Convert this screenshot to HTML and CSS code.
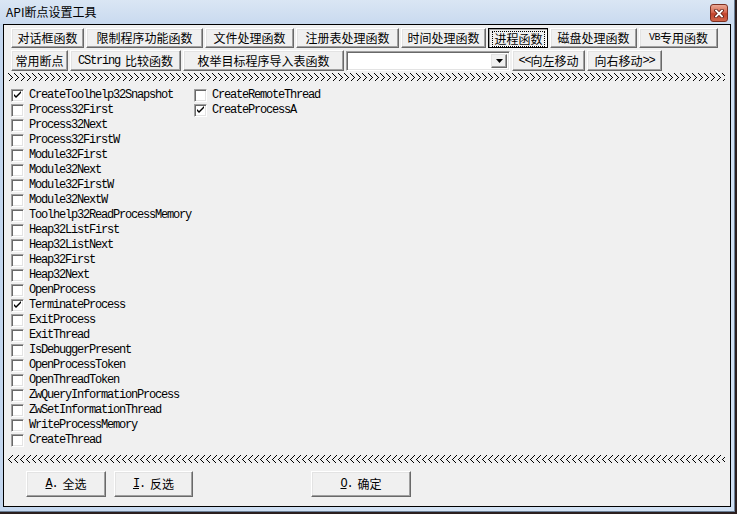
FILE: index.html
```html
<!DOCTYPE html>
<html>
<head>
<meta charset="utf-8">
<title>API断点设置工具</title>
<link rel="stylesheet" href="styles.css">
</head>
<body>
<div class="window">
  <div class="titlebar">
    <span class="title">API断点设置工具</span>
    <span class="close">
      <svg width="10" height="9" viewBox="0 0 10 9"><path d="M2 1.5 L8 7.5 M8 1.5 L2 7.5" stroke="#5a1a10" stroke-width="3.4" stroke-linecap="square"/><path d="M2 1.5 L8 7.5 M8 1.5 L2 7.5" stroke="#fff" stroke-width="1.8" stroke-linecap="square"/></svg>
    </span>
  </div>
  <div class="client">
    <div class="row row1">
      <div class="btn w73">对话框函数</div>
      <div class="btn w117">限制程序功能函数</div>
      <div class="btn w89">文件处理函数</div>
      <div class="btn w103">注册表处理函数</div>
      <div class="btn w85">时间处理函数</div>
      <div class="btn pressed w60"><span class="focus">进程函数</span></div>
      <div class="btn w87">磁盘处理函数</div>
      <div class="btn w79"><span class="lat small">VB</span>专用函数</div>
    </div>
    <div class="row row2">
      <div class="btn w57">常用断点</div>
      <div class="btn w111"><span class="lat sp">CString</span>比较函数</div>
      <div class="btn w161">枚举目标程序导入表函数</div>
      <div class="combo">
        <span class="combo-field"></span>
        <span class="combo-arrow"><svg width="7" height="4" viewBox="0 0 7 4"><path d="M0 0 H7 L3.5 4 Z" fill="#000"/></svg></span>
      </div>
      <div class="btn w73"><span class="lat">&lt;&lt;</span>向左移动</div>
      <div class="btn w75">向右移动<span class="lat">&gt;&gt;</span></div>
    </div>
    <svg class="chevrons" width="717" height="9" viewBox="0 0 717 9">
      <defs>
        <pattern id="rgt" width="6" height="9" patternUnits="userSpaceOnUse">
          <path d="M0.5 0.5 L4.5 4.5 L0.5 8.5" fill="none" stroke="#000" stroke-width="1" shape-rendering="crispEdges"/>
        </pattern>
      </defs>
      <rect width="717" height="9" fill="url(#rgt)"/>
    </svg>
    <div class="list">
      <div class="col col1">
        <label class="item"><span class="box checked"></span>CreateToolhelp32Snapshot</label>
        <label class="item"><span class="box"></span>Process32First</label>
        <label class="item"><span class="box"></span>Process32Next</label>
        <label class="item"><span class="box"></span>Process32FirstW</label>
        <label class="item"><span class="box"></span>Module32First</label>
        <label class="item"><span class="box"></span>Module32Next</label>
        <label class="item"><span class="box"></span>Module32FirstW</label>
        <label class="item"><span class="box"></span>Module32NextW</label>
        <label class="item"><span class="box"></span>Toolhelp32ReadProcessMemory</label>
        <label class="item"><span class="box"></span>Heap32ListFirst</label>
        <label class="item"><span class="box"></span>Heap32ListNext</label>
        <label class="item"><span class="box"></span>Heap32First</label>
        <label class="item"><span class="box"></span>Heap32Next</label>
        <label class="item"><span class="box"></span>OpenProcess</label>
        <label class="item"><span class="box checked"></span>TerminateProcess</label>
        <label class="item"><span class="box"></span>ExitProcess</label>
        <label class="item"><span class="box"></span>ExitThread</label>
        <label class="item"><span class="box"></span>IsDebuggerPresent</label>
        <label class="item"><span class="box"></span>OpenProcessToken</label>
        <label class="item"><span class="box"></span>OpenThreadToken</label>
        <label class="item"><span class="box"></span>ZwQueryInformationProcess</label>
        <label class="item"><span class="box"></span>ZwSetInformationThread</label>
        <label class="item"><span class="box"></span>WriteProcessMemory</label>
        <label class="item"><span class="box"></span>CreateThread</label>
      </div>
      <div class="col col2">
        <label class="item"><span class="box"></span>CreateRemoteThread</label>
        <label class="item"><span class="box checked"></span>CreateProcessA</label>
      </div>
    </div>
    <svg class="chevrons lower" width="717" height="9" viewBox="0 0 717 9">
      <defs>
        <pattern id="lft" width="6" height="9" patternUnits="userSpaceOnUse">
          <path d="M4.5 0.5 L0.5 4.5 L4.5 8.5" fill="none" stroke="#000" stroke-width="1" shape-rendering="crispEdges"/>
        </pattern>
      </defs>
      <rect width="717" height="9" fill="url(#lft)"/>
    </svg>
    <div class="actions">
      <div class="btn big w80"><span class="lat sp"><u>A</u>.</span>全选</div>
      <div class="btn big w79"><span class="lat sp"><u>I</u>.</span>反选</div>
      <div class="btn big w100 ok"><span class="lat sp"><u>O</u>.</span>确定</div>
    </div>
  </div>
</div>
</body>
</html>
```

FILE: styles.css
```css
* { box-sizing: border-box; }
html, body { margin: 0; padding: 0; }
body {
  width: 737px;
  height: 514px;
  overflow: hidden;
  background: #2b1f1f;
  font-family: "Noto Sans CJK SC", "Liberation Sans", sans-serif;
  font-size: 12px;
  color: #000;
}
.window {
  width: 735px;
  height: 512px;
  background: linear-gradient(to right, #c3d6ee, #d4e3f4 60%, #cfdff2);
  border-right: 1px solid #6b7f96;
  border-bottom: 1px solid #6b7f96;
  display: flex;
  flex-direction: column;
}
.titlebar {
  height: 24px;
  display: flex;
  align-items: flex-start;
  background: linear-gradient(to bottom, #dae6f4, #c9daef);
}
.title {
  padding-left: 6px;
  line-height: 24px;
  font-size: 12px;
  color: #000;
}
.close {
  margin-left: auto;
  margin-right: 6px;
  margin-top: 4px;
  width: 18px;
  height: 18px;
  border: 1px solid #7d3022;
  border-radius: 3px;
  background: linear-gradient(to bottom, #e9a896 0%, #d86a52 45%, #c2432b 55%, #d1664c 100%);
  display: flex;
  align-items: center;
  justify-content: center;
}
.client {
  margin-left: 3px;
  width: 728px;
  height: 483px;
  border: 1px solid #000;
  background: #f0f0f0;
  display: flex;
  flex-direction: column;
}
.row {
  display: flex;
  gap: 2px;
  margin-left: 7px;
}
.row1 { margin-top: 3px; height: 20px; }
.row2 { margin-top: 2px; height: 21px; }
.btn {
  height: 100%;
  display: flex;
  align-items: center;
  justify-content: center;
  background: #f0f0f0;
  border: 1px solid;
  border-color: #ffffff #696969 #696969 #ffffff;
  box-shadow: inset -1px -1px 0 #a0a0a0, inset 1px 1px 0 #e3e3e3;
  white-space: nowrap;
  font-size: 12px;
  line-height: 1;
}
.btn.pressed {
  border-color: #000;
  box-shadow: inset 1px 1px 0 #a0a0a0, inset -1px -1px 0 #ffffff;
  padding-top: 1px;
  padding-left: 1px;
}
.focus {
  outline: 1px dotted #000;
  outline-offset: 1px;
}
.lat {
  font-family: "Liberation Mono", monospace;
  font-size: 12px;
  letter-spacing: -1.2px;
}
.lat.sp { margin-right: 5px; }
.lat.small { font-size: 10px; letter-spacing: -0.6px; }
.w57 { width: 57px; }
.w60 { width: 60px; }
.w73 { width: 73px; }
.w75 { width: 75px; }
.w79 { width: 79px; }
.w80 { width: 80px; }
.w85 { width: 85px; }
.w87 { width: 87px; }
.w89 { width: 89px; }
.w100 { width: 100px; }
.w103 { width: 103px; }
.w111 { width: 111px; }
.w117 { width: 117px; }
.w161 { width: 161px; }
.combo {
  width: 164px;
  height: 20px;
  margin-top: 1px;
  display: flex;
  border: 1px solid;
  border-color: #a0a0a0 #ffffff #ffffff #a0a0a0;
  box-shadow: inset 1px 1px 0 #696969, inset -1px -1px 0 #e3e3e3;
  background: #fff;
  padding: 2px;
}
.combo-field { flex: 1; }
.combo-arrow {
  width: 16px;
  height: 100%;
  background: #f0f0f0;
  border: 1px solid;
  border-color: #e3e3e3 #696969 #696969 #e3e3e3;
  box-shadow: inset -1px -1px 0 #a0a0a0;
  display: flex;
  align-items: center;
  justify-content: center;
}
.chevrons {
  display: block;
  margin-left: 4px;
  margin-top: 2px;
  flex: none;
}
.chevrons.lower { margin-top: 8px; }
.list {
  margin-top: 5px;
  margin-left: 7px;
  display: grid;
  grid-template-columns: 183px auto;
  align-items: start;
  height: 360px;
}
.col { display: flex; flex-direction: column; }
.item {
  height: 15px;
  display: flex;
  align-items: center;
  gap: 5px;
  font-family: "Liberation Mono", monospace;
  font-size: 12px;
  letter-spacing: -1.2px;
  white-space: nowrap;
}
.box {
  width: 13px;
  height: 13px;
  flex: none;
  margin-top: 1px;
  background: #fff;
  border: 1px solid;
  border-color: #a0a0a0 #ffffff #ffffff #a0a0a0;
  box-shadow: inset 1px 1px 0 #696969, inset -1px -1px 0 #e3e3e3;
}
.box.checked {
  background: #fff url("data:image/svg+xml;utf8,<svg xmlns='http://www.w3.org/2000/svg' width='11' height='11' viewBox='0 0 11 11'><path d='M2 4 L2 6 L4 8 L9 3 L9 1 L4 6 Z' fill='black'/></svg>") no-repeat 0 0;
}
.actions {
  margin-top: 7px;
  margin-left: 22px;
  height: 26px;
  display: flex;
  gap: 8px;
}
.btn.big { height: 26px; }
.btn.ok { margin-left: 110px; }
u { text-decoration: underline; text-underline-offset: 1px; }
```
